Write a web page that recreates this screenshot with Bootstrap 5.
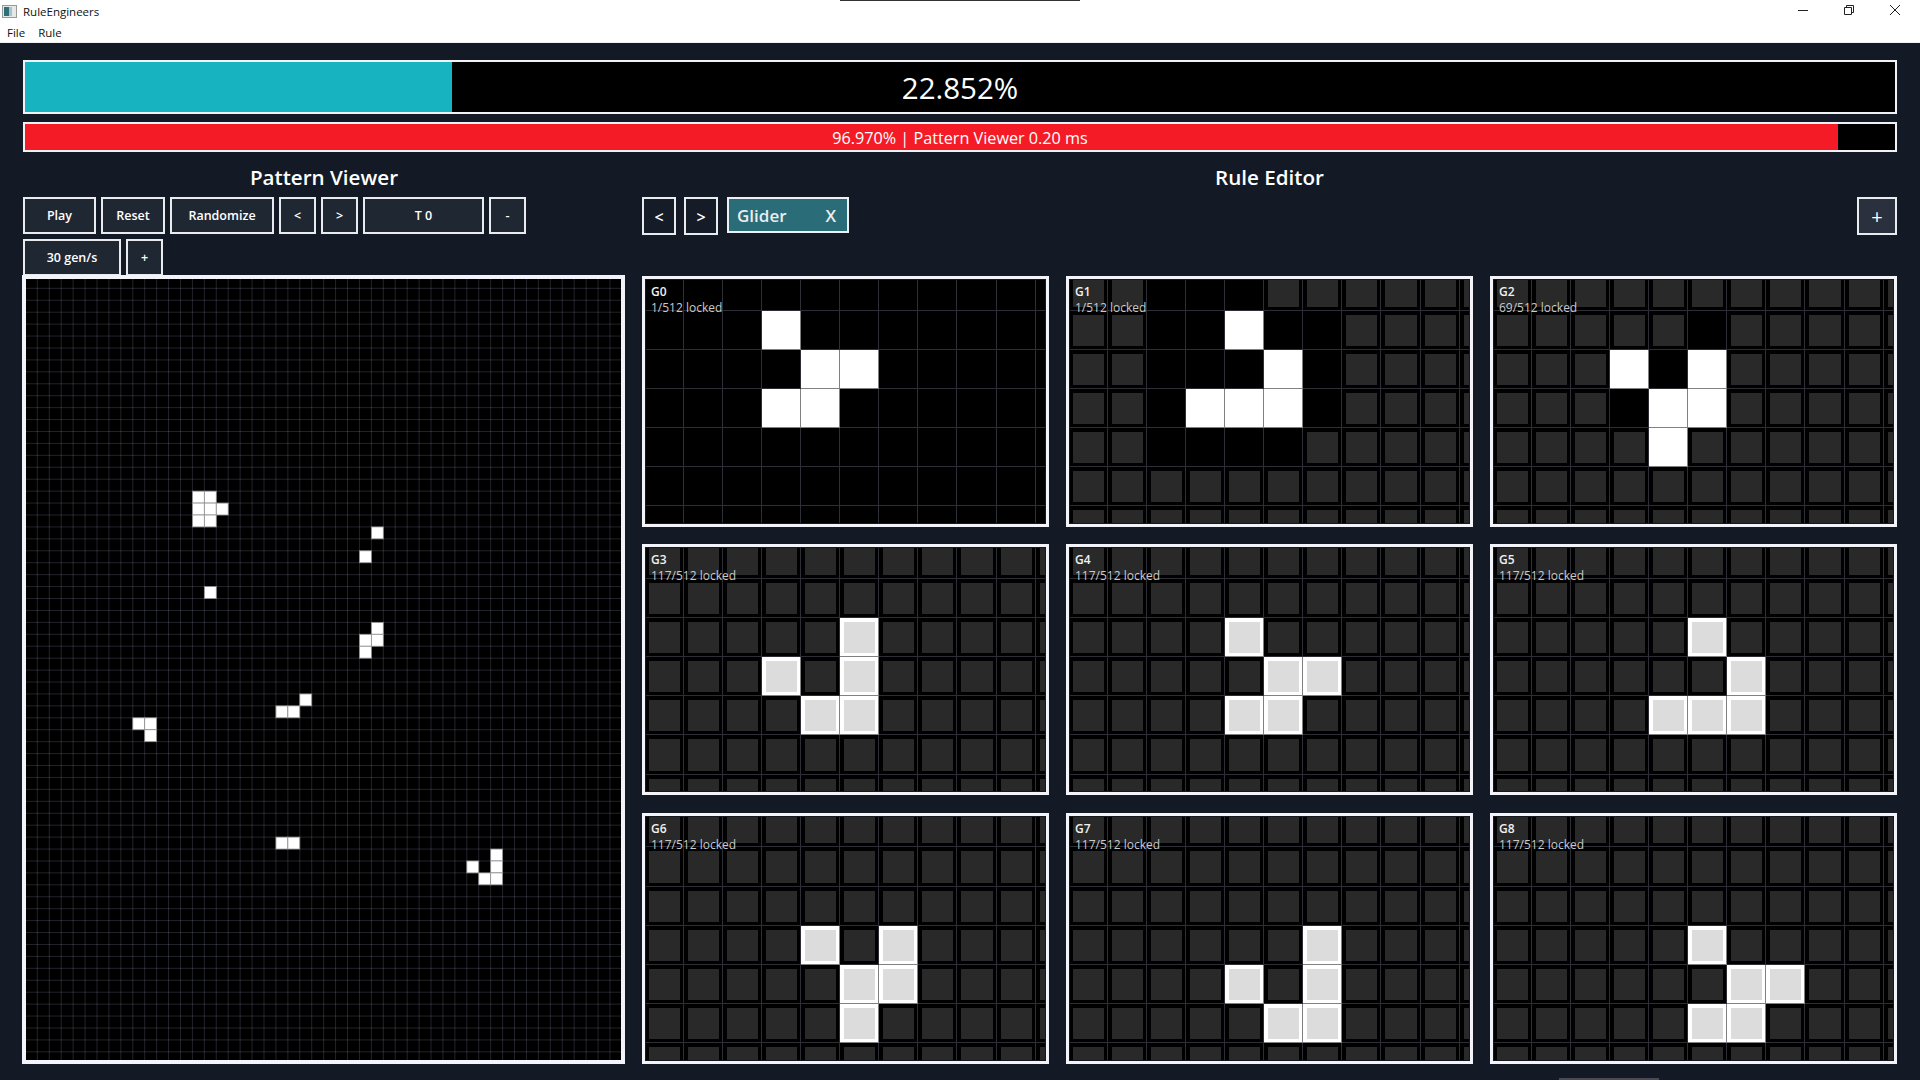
<!DOCTYPE html>
<html lang="en">
<head>
    <meta charset="UTF-8">
    <meta name="viewport" content="width=device-width, initial-scale=1.0">
    <title>RuleEngineers</title>
    <link href="https://cdn.jsdelivr.net/npm/bootstrap@5.3.3/dist/css/bootstrap.min.css" rel="stylesheet">
    <style>
        body { width: 1920px; height: 1080px; overflow: hidden; background: #131a25; color: #fff; font-family: "Open Sans", "Noto Sans", sans-serif; }
        .title-strip { height: 22px; background: #fff; color: #111; font-size: 11.5px; padding: 1px 2px 0; }
        .app-icon { width: 15px; height: 13px; margin-right: 6px; }
        .win-btn { width: 46px; }
        .win-group { margin: -1px 0 0; }
        .title-line { left: 840px; top: 0; width: 240px; height: 1px; background: #333; }
        .menu-strip { height: 21px; background: #fff; color: #111; font-size: 11.5px; padding: 2px 0 0 7px; gap: 13px; border-bottom: 1px solid #eef0f2; }
        .scroll-thumb { left: 1559px; bottom: 0; width: 100px; height: 2px; background: #4a4a52; }
        .app-main { padding: 17px 23px 0; }
        .stat-bar { background: #000; border: 2px solid #f0f2f5; border-radius: 0; }
        .stat-fit { height: 54px; margin-bottom: 8px; font-size: 29.5px; font-weight: 500; }
        .stat-perf { height: 30px; font-size: 16.2px; font-weight: 500; }
        .stat-fit .progress-bar { background: #17b3c1; }
        .stat-perf .progress-bar { background: #f41b27; }
        .stat-label { color: #fff; white-space: nowrap; margin-top: 1px; }
        .col-viewer { width: 602px; }
        .col-editor { width: 1255px; }
        .pane-title { height: 45px; padding-top: 9px; margin: 0; font-size: 20.6px; font-weight: 600; line-height: 32px; }
        .tool-row { gap: 5px; }
        .tool-row-next { margin-top: 5px; }
        .tool-btn { height: 37px; padding: 2px 0 0; background: #1f2733; color: #fff; border: 2px solid #e9ebef; border-radius: 0; font-size: 12.5px; font-weight: 600; line-height: 1; }
        .tool-btn:hover { background: #1f2733; color: #fff; border-color: #e9ebef; }
        .w-play { width: 73px; }
        .w-reset { width: 64px; }
        .w-rand { width: 104px; }
        .w-step { width: 37px; }
        .w-time { width: 121px; }
        .w-gens { width: 98px; }
        .editor-tools { height: 79px; gap: 8px; }
        .nav-btn { width: 34px; height: 38px; background: #161c27; font-size: 16px; }
        .add-btn { width: 40px; height: 38px; background: #2a303d; font-size: 20px; font-weight: 400; }
        .rule-tab { width: 122px; height: 36px; margin-left: 1px; background: #2a6c78; border: 2px solid #eef1f4; padding: 1px 11px 0 8px; font-size: 17px; font-weight: 600; color: #e8eef0; }
        .viewer-box { width: 603px; height: 789px; margin: -1px 0 0 -1px; background: #000; border: 4px solid #f2f4f9; position: relative; }
        .viewer-box svg { display: block; }
        .rule-grid { display: grid; grid-template-columns: repeat(3, 407px); grid-auto-rows: 251px; gap: 17.4px 17px; }
        .rule-card { border: 3px solid #f2f4f9; padding: 1px; background: #15181d; }
        .rule-clip { width: 100%; height: 100%; background: #000; }
        .cell-grid { display: grid; grid-template-columns: repeat(11, 39.1px); grid-auto-rows: 39.1px; margin: -8.4px 0 0 -1.3px; }
        .rc { position: relative; box-shadow: inset -1px -1px 0 #2e2e36; }
        .rc.on { background: #fff; box-shadow: inset -1px -1px 0 #808080; }
        .rc.lock::after { content: ""; position: absolute; inset: 4px; background: #292929; }
        .rc.on.lock::after { background: #dcdcdc; }
        .rule-tag { left: 5px; top: 4px; font-size: 12px; line-height: 16px; z-index: 2; }
        .rule-tag b { font-weight: 600; color: #f0f0f0; }
        .rule-tag span { color: #cacaca; }
    </style>
</head>
<body>
    <div class="title-strip d-flex align-items-center position-relative">
        <div class="title-line position-absolute"></div>
        <svg class="app-icon" viewBox="0 0 15 13"><rect x=".5" y=".5" width="14" height="12" fill="#e6e8e8" stroke="#999"/><rect x="2" y="2" width="5" height="9" fill="#2f6f78"/><rect x="7" y="2" width="3" height="9" fill="#a9c4c8"/></svg>
        <span>RuleEngineers</span>
        <div class="d-flex ms-auto align-self-start win-group">
            <div class="win-btn d-flex justify-content-center pt-2"><svg width="10" height="10"><path d="M0 2.5H10" stroke="#222"/></svg></div>
            <div class="win-btn d-flex justify-content-center"><svg width="10" height="16"><path d="M.5 7.5h7v7h-7zM2.5 7.5v-2h7v7h-2" fill="none" stroke="#222"/></svg></div>
            <div class="win-btn d-flex justify-content-center"><svg width="12" height="16"><path d="M1 5L11 15M11 5L1 15" stroke="#222"/></svg></div>
        </div>
    </div>
    <div class="menu-strip d-flex align-items-center">
        <span>File</span>
        <span>Rule</span>
    </div>

    <div class="app-main">
        <div class="progress stat-bar stat-fit position-relative">
            <div class="progress-bar" style="width: 22.852%"></div>
            <div class="stat-label position-absolute top-50 start-50 translate-middle">22.852%</div>
        </div>
        <div class="progress stat-bar stat-perf position-relative">
            <div class="progress-bar" style="width: 96.970%"></div>
            <div class="stat-label position-absolute top-50 start-50 translate-middle">96.970% | Pattern Viewer 0.20 ms</div>
        </div>

        <div class="d-flex justify-content-between">
            <div class="col-viewer">
                <h2 class="pane-title text-center">Pattern Viewer</h2>
                <div class="d-flex flex-wrap tool-row">
                    <button class="btn tool-btn w-play">Play</button>
                    <button class="btn tool-btn w-reset">Reset</button>
                    <button class="btn tool-btn w-rand">Randomize</button>
                    <button class="btn tool-btn w-step">&lt;</button>
                    <button class="btn tool-btn w-step">&gt;</button>
                    <button class="btn tool-btn w-time">T 0</button>
                    <button class="btn tool-btn w-step">-</button>
                </div>
                <div class="d-flex tool-row tool-row-next">
                    <button class="btn tool-btn w-gens">30 gen/s</button>
                    <button class="btn tool-btn w-step">+</button>
                </div>
                <div class="viewer-box overflow-hidden"><svg id="viewer" width="595" height="781"></svg></div>
            </div>
            <div class="col-editor">
                <h2 class="pane-title text-center">Rule Editor</h2>
                <div class="d-flex align-items-start editor-tools">
                    <button class="btn tool-btn nav-btn">&lt;</button>
                    <button class="btn tool-btn nav-btn">&gt;</button>
                    <div class="rule-tab d-flex justify-content-between align-items-center"><span>Glider</span><span>X</span></div>
                    <button class="btn tool-btn add-btn ms-auto">+</button>
                </div>
                <div class="rule-grid" id="rules"></div>
            </div>
        </div>
    </div>
    <div class="scroll-thumb position-fixed"></div>

    <script src="https://cdn.jsdelivr.net/npm/bootstrap@5.3.3/dist/js/bootstrap.bundle.min.js"></script>
    <script>
        // live cells of the pattern viewer, [col, row]
        const live = [[14,18],[15,18],[14,19],[15,19],[16,19],[14,20],[15,20],[29,21],[28,23],[15,26],
            [29,29],[28,30],[29,30],[28,31],[23,35],[21,36],[22,36],[9,37],[10,37],[10,38],[21,47],[22,47],
            [39,48],[37,49],[39,49],[38,50],[39,50]];

        const P = 11.93, OX = -0.6, OY = -2.6;
        let svg = '';
        for (let i = 1; i < 50; i++) {
            const x = OX + i * P;
            svg += `<line x1="${x}" x2="${x}" y1="0" y2="781" stroke="#d0d0ff" stroke-opacity=".17"/>`;
        }
        for (let i = 1; i < 66; i++) {
            const y = OY + i * P;
            svg += `<line y1="${y}" y2="${y}" x1="0" x2="595" stroke="#d0d0ff" stroke-opacity=".17"/>`;
        }
        live.forEach(c => {
            svg += `<rect x="${OX + c[0] * P}" y="${OY + c[1] * P}" width="${P}" height="${P}" fill="#fff" stroke="#909090" stroke-width=".8"/>`;
        });
        document.getElementById('viewer').innerHTML = svg;

        // rule cards: on = white cells, open = black (unlocked) cells, "c,r"
        const rules = [
            { name: 'G0', text: '1/512 locked', on: ['3,1','4,2','5,2','3,3','4,3'], allOpen: true },
            { name: 'G1', text: '1/512 locked', on: ['4,1','5,2','3,3','4,3','5,3'],
              open: ['2,0','3,0','4,0','2,1','3,1','5,1','6,1','2,2','3,2','4,2','6,2','2,3','6,3','2,4','3,4','4,4','5,4'] },
            { name: 'G2', text: '69/512 locked', on: ['3,2','5,2','4,3','5,3','4,4'], open: ['5,1','4,2','3,3'] },
            { name: 'G3', text: '117/512 locked', lockOn: ['5,2','3,3','5,3','4,4','5,4'] },
            { name: 'G4', text: '117/512 locked', lockOn: ['4,2','5,3','6,3','4,4','5,4'] },
            { name: 'G5', text: '117/512 locked', lockOn: ['5,2','6,3','4,4','5,4','6,4'] },
            { name: 'G6', text: '117/512 locked', lockOn: ['4,3','6,3','5,4','6,4','5,5'] },
            { name: 'G7', text: '117/512 locked', lockOn: ['6,3','4,4','6,4','5,5','6,5'] },
            { name: 'G8', text: '117/512 locked', lockOn: ['5,3','6,4','7,4','5,5','6,5'] }
        ];

        document.getElementById('rules').innerHTML = rules.map(r => {
            let cells = '';
            for (let y = 0; y < 7; y++) {
                for (let x = 0; x < 11; x++) {
                    const k = x + ',' + y;
                    let cls = 'rc';
                    if ((r.on || []).includes(k)) cls += ' on';
                    else if ((r.lockOn || []).includes(k)) cls += ' on lock';
                    else if (!r.allOpen && !(r.open || []).includes(k)) cls += ' lock';
                    cells += `<div class="${cls}"></div>`;
                }
            }
            return `<div class="rule-card">
                <div class="rule-clip position-relative overflow-hidden">
                    <div class="rule-tag position-absolute"><b>${r.name}</b><br><span>${r.text}</span></div>
                    <div class="cell-grid">${cells}</div>
                </div>
            </div>`;
        }).join('');
    </script>
</body>
</html>
